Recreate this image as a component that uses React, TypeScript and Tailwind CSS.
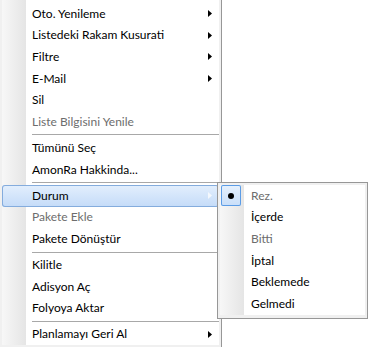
import React from "react";

type Item =
  | { kind: "item"; label: string; arrow?: boolean; disabled?: boolean; active?: boolean }
  | { kind: "sep" };

const mainItems: Item[] = [
  { kind: "item", label: "Oto. Yenileme", arrow: true },
  { kind: "item", label: "Listedeki Rakam Kusurati", arrow: true },
  { kind: "item", label: "Filtre", arrow: true },
  { kind: "item", label: "E-Mail", arrow: true },
  { kind: "item", label: "Sil" },
  { kind: "item", label: "Liste Bilgisini Yenile", disabled: true },
  { kind: "sep" },
  { kind: "item", label: "Tümünü Seç" },
  { kind: "item", label: "AmonRa Hakkinda..." },
  { kind: "sep" },
  { kind: "item", label: "Durum", arrow: true, active: true },
  { kind: "item", label: "Pakete Ekle", disabled: true },
  { kind: "item", label: "Pakete Dönüştür" },
  { kind: "sep" },
  { kind: "item", label: "Kilitle" },
  { kind: "item", label: "Adisyon Aç" },
  { kind: "item", label: "Folyoya Aktar" },
  { kind: "sep" },
  { kind: "item", label: "Planlamayı Geri Al", arrow: true },
];

const subItems: { label: string; disabled?: boolean; checked?: boolean }[] = [
  { label: "Rez.", disabled: true, checked: true },
  { label: "İçerde" },
  { label: "Bitti", disabled: true },
  { label: "İptal" },
  { label: "Beklemede" },
  { label: "Gelmedi" },
];

function Arrow({ light }: { light?: boolean }) {
  return (
    <svg width="4" height="7" viewBox="0 0 4 7" className="ml-auto mr-[7px] shrink-0">
      <polygon points="0,0 4,3.5 0,7" fill={light ? "#f4f8fd" : "#000"} />
    </svg>
  );
}

export default function App() {
  return (
    <div className="relative h-[347px] w-[368px] overflow-hidden bg-white font-['Lato',sans-serif] text-[12px] leading-none text-black">
      {/* Main context menu */}
      <div className="w-[222px] border-r border-[#979797] bg-[#f0f0f0] pl-[2px] pr-[2px] pb-[2px]">
        <div className="bg-[linear-gradient(to_right,#f7f7f7,#e5e5e5_24px,#ffffff_24px)] pt-[3px]">
          {mainItems.map((it, i) =>
            it.kind === "sep" ? (
              <div key={i} className="flex h-[4.6px] items-center pl-[30px]">
                <div className="h-px w-full bg-[#a8a8a8]" />
              </div>
            ) : (
              <div
                key={i}
                className={
                  "flex h-[21.6px] items-center pl-[30px] " +
                  (it.active
                    ? "rounded-[3px] bg-[linear-gradient(to_bottom,#e3effd,#c4dbf8)] shadow-[inset_0_0_0_1px_#84acdd] "
                    : "") +
                  (it.disabled ? "text-[#6d6d6d]" : "text-black")
                }
              >
                <span className="whitespace-nowrap">{it.label}</span>
                {it.arrow && <Arrow light={it.active} />}
              </div>
            )
          )}
        </div>
      </div>

      {/* Submenu */}
      <div className="absolute left-[217px] top-[182px] w-[151px] border border-[#979797] bg-[#f0f0f0] p-[2px] pb-[3px]">
        <div className="bg-[linear-gradient(to_right,#f7f7f7,#e5e5e5_24px,#ffffff_24px)]">
          {subItems.map((it, i) => (
            <div key={i} className="flex h-[21.6px] items-center">
              <div className="flex h-full w-[25px] shrink-0 items-center">
                {it.checked && (
                  <div className="ml-[1px] flex h-[21px] w-[20px] items-center justify-center rounded-[2px] bg-[linear-gradient(to_bottom,#e6f1fd,#c8def9)] shadow-[inset_0_0_0_1px_#5b9ce6]">
                    <div className="h-[6px] w-[6px] rounded-full bg-black" />
                  </div>
                )}
              </div>
              <span
                className={
                  "whitespace-nowrap pl-[6px] " + (it.disabled ? "text-[#6d6d6d]" : "text-black")
                }
              >
                {it.label}
              </span>
            </div>
          ))}
        </div>
      </div>
    </div>
  );
}
